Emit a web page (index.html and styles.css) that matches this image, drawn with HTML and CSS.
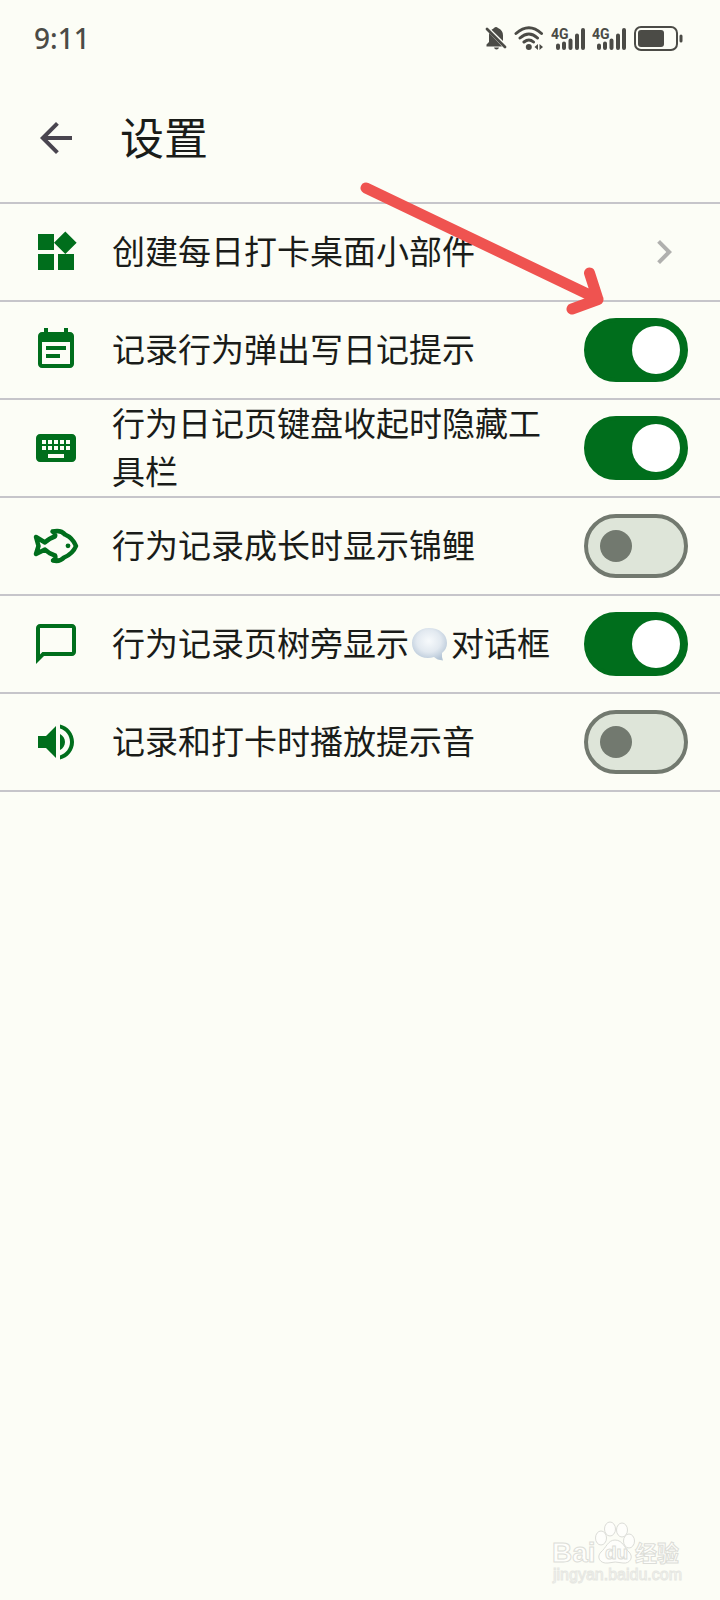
FILE: index.html
```html
<!DOCTYPE html>
<html lang="zh-CN">
<head>
    <meta charset="UTF-8">
    <meta name="viewport" content="width=device-width, initial-scale=1.0">
    <title>设置</title>
    <link rel="stylesheet" href="styles.css">
</head>
<body>
    <div class="status-bar">
        <span class="time">9:11</span>
        <div class="status-icons">
            <svg width="22" height="26" viewBox="0 0 22 26">
                <path d="M6.500 4.800Q8.600 3.500 9 3Q11 1 13 3Q18 5 18 10.500V16ZM4.200 8L17 21.500H1.500V19.500L4 17V11Q4 9 4.200 8ZM9 22.500H14Q13.500 24.500 11.500 24.500T9 22.500Z" fill="currentColor"/>
                <path d="M2 4L20 22" stroke="currentColor" stroke-width="2.800" stroke-linecap="round"/>
            </svg>
            <svg width="30" height="26" viewBox="0 0 30 26" fill="none" stroke="currentColor" stroke-width="3" stroke-linecap="round">
                <path d="M2 8.500Q15-3 27.500 8.500M6 13Q15 5 23.500 13M10 17Q15 13 19.500 17"/>
                <circle cx="14.800" cy="22" r="3" fill="currentColor" stroke="none"/>
                <path d="M24 19V25L20.500 22ZM25.500 19V25L29 22Z" fill="currentColor" stroke="none"/>
            </svg>
            <svg width="34" height="26" viewBox="0 0 34 26">
                <text class="network" x="0" y="14">4G</text>
                <path d="M7 20.500V23M13 18.500V23M19.500 15.500V23M26 10.500V23M32 5V23" stroke="currentColor" stroke-width="4" stroke-linecap="round"/>
            </svg>
            <svg width="34" height="26" viewBox="0 0 34 26">
                <text class="network" x="0" y="14">4G</text>
                <path d="M7 20.500V23M13 18.500V23M19.500 15.500V23M26 10.500V23M32 5V23" stroke="currentColor" stroke-width="4" stroke-linecap="round"/>
            </svg>
            <svg width="50" height="26" viewBox="0 0 50 26">
                <rect x="2" y="2" width="42" height="23" rx="6" fill="none" stroke="currentColor" stroke-width="2"/>
                <rect x="5" y="5" width="26" height="17" rx="3" fill="currentColor"/>
                <path d="M48 11V16" stroke="currentColor" stroke-width="3" stroke-linecap="round"/>
            </svg>
        </div>
    </div>

    <header class="app-bar">
        <button class="back" type="button" aria-label="返回">
            <svg class="icon" viewBox="0 0 24 24" fill="currentColor"><path d="M20 11H7.830l5.590-5.590L12 4l-8 8 8 8 1.410-1.410L7.830 13H20v-2z"/></svg>
        </button>
        <h1>设置</h1>
    </header>

    <main class="settings">
        <a class="row" href="#">
            <svg class="icon" viewBox="0 0 24 24" fill="currentColor"><path d="M13 13v8h8v-8h-8zM3 21h8v-8H3v8zM3 3v8h8V3H3zm13.660-1.310L11 7.340 16.660 13l5.660-5.660-5.660-5.650z"/></svg>
            <span class="text">创建每日打卡桌面小部件</span>
            <svg class="icon chevron" viewBox="0 0 24 24" fill="currentColor"><path d="M10 6L8.590 7.410 13.170 12l-4.580 4.590L10 18l6-6z"/></svg>
        </a>
        <label class="row">
            <svg class="icon" viewBox="0 0 24 24" fill="currentColor"><path d="M17 10H7v2h10v-2zm2-7h-1V1h-2v2H8V1H6v2H5c-1.110 0-1.990.900-1.990 2L3 19c0 1.100.890 2 2 2h14c1.100 0 2-.900 2-2V5c0-1.100-.900-2-2-2zm0 16H5V8h14v11zm-5-5H7v2h7v-2z"/></svg>
            <span class="text">记录行为弹出写日记提示</span>
            <input class="switch" type="checkbox" role="switch" checked>
        </label>
        <label class="row">
            <svg class="icon" viewBox="0 0 24 24" fill="currentColor"><path d="M20 5H4c-1.100 0-1.990.900-1.990 2L2 17c0 1.100.900 2 2 2h16c1.100 0 2-.900 2-2V7c0-1.100-.900-2-2-2zm-9 3h2v2h-2V8zm0 3h2v2h-2v-2zM8 8h2v2H8V8zm0 3h2v2H8v-2zm-1 2H5v-2h2v2zm0-3H5V8h2v2zm9 7H8v-2h8v2zm0-4h-2v-2h2v2zm0-3h-2V8h2v2zm3 3h-2v-2h2v2zm0-3h-2V8h2v2z"/></svg>
            <span class="text">行为日记页键盘收起时隐藏工具栏</span>
            <input class="switch" type="checkbox" role="switch" checked>
        </label>
        <label class="row">
            <svg class="icon" viewBox="0 0 48 48" fill="none" stroke="currentColor" stroke-width="4.500" stroke-linejoin="round">
                <path d="M4 15L13 20.500C16 17.500 19 15.500 23 14.500Q24 12 20.500 9.500Q29 7.500 33 12.500C39 15 42 19 44 24C42 29 38 33 32 35.500Q28 40 21 38.500Q24.500 36 23 33.500C19 32.500 16 30.500 13 27.500L4 32L6.500 24Z"/>
                <circle cx="36" cy="23.800" r="2.400" fill="currentColor" stroke="none"/>
            </svg>
            <span class="text">行为记录成长时显示锦鲤</span>
            <input class="switch" type="checkbox" role="switch">
        </label>
        <label class="row">
            <svg class="icon" viewBox="0 0 24 24" fill="currentColor"><path d="M20 2H4c-1.100 0-2 .900-2 2v18l4-4h14c1.100 0 2-.900 2-2V4c0-1.100-.900-2-2-2zm0 14H5.200L4 17.200V4h16v12z"/></svg>
            <span class="text">行为记录页树旁显示<svg class="bubble" viewBox="0 0 42 36" aria-hidden="true">
                <defs>
                    <radialGradient id="bubble-fill" cx="0.480" cy="0.400" r="0.620">
                        <stop offset="0" stop-color="#f7fafc"/>
                        <stop offset="0.550" stop-color="#e2e9f0"/>
                        <stop offset="1" stop-color="#b4c5d6"/>
                    </radialGradient>
                </defs>
                <path d="M20 2C30 2 38 8 38 17Q38 23 33 27Q32.500 31 34 34.500Q28 34 25 31Q22 32 19 32C9 32 3 25 3 17S10 2 20 2Z" fill="url(#bubble-fill)"/>
            </svg>对话框</span>
            <input class="switch" type="checkbox" role="switch" checked>
        </label>
        <label class="row">
            <svg class="icon" viewBox="0 0 24 24" fill="currentColor"><path d="M3 9v6h4l5 5V4L7 9H3zm13.500 3c0-1.770-1.020-3.290-2.500-4.030v8.050c1.480-.730 2.500-2.250 2.500-4.020zM14 3.230v2.060c2.890.860 5 3.540 5 6.710s-2.110 5.850-5 6.710v2.060c4.010-.910 7-4.490 7-8.770s-2.990-7.860-7-8.770z"/></svg>
            <span class="text">记录和打卡时播放提示音</span>
            <input class="switch" type="checkbox" role="switch">
        </label>
    </main>

    <svg class="pointer" width="250" height="140" viewBox="0 0 250 140" aria-hidden="true">
        <path d="M11 12L243 123M234.500 97L243 123.500L217 133" fill="none" stroke="#ef5350" stroke-width="11" stroke-linecap="round" stroke-linejoin="round"/>
    </svg>

    <svg class="watermark" width="136" height="68" viewBox="0 0 136 68">
        <g class="outline">
            <text class="latin" x="2" y="43">Bai</text>
            <ellipse cx="51" cy="19" rx="5.500" ry="7"/>
            <ellipse cx="60" cy="10" rx="5.500" ry="7"/>
            <ellipse cx="72" cy="11" rx="5.500" ry="7"/>
            <ellipse cx="79" cy="22" rx="5.500" ry="7"/>
            <path d="M65 21C73 21 75 30 79 33C84 38 80 45 73 44Q65 42 58 44C50 45 46 38 51 33C56 29 58 21 65 21Z"/>
            <text class="du" x="55" y="40">du</text>
            <text class="cjk" x="85" y="42">经验</text>
            <text class="site" x="3" y="61">jingyan.baidu.com</text>
        </g>
    </svg>
</body>
</html>
```
FILE: styles.css
```css
* {
    box-sizing: border-box;
    margin: 0;
    padding: 0;
}

body {
    position: relative;
    min-height: 100vh;
    background-color: #fcfdf6;
    color: #1a1c19;
    font-family: "Noto Sans", "Noto Sans CJK SC", sans-serif;
}

svg {
    display: block;
    flex-shrink: 0;
}

.status-bar {
    display: flex;
    align-items: center;
    justify-content: space-between;
    height: 74px;
    padding: 2px 37px 0 34px;
    color: #4b4b46;
}

.time {
    font-size: 28px;
    font-weight: 500;
    line-height: 32px;
}

.status-icons {
    display: flex;
    align-items: center;
    gap: 7px;
}

.network {
    font-family: "Roboto", sans-serif;
    font-size: 14px;
    font-weight: 700;
    fill: currentColor;
}

.app-bar {
    display: flex;
    align-items: center;
    gap: 40px;
    height: 128px;
    padding: 0 32px;
}

.back {
    border: none;
    background: none;
    color: #49454f;
    cursor: pointer;
}

h1 {
    font-size: 44px;
    font-weight: 400;
    line-height: 56px;
}

.icon {
    width: 48px;
    height: 48px;
}

.settings {
    border-top: 2px solid #c6c5ca;
}

.row {
    display: flex;
    align-items: center;
    min-height: 98px;
    padding: 0 32px;
    border-bottom: 2px solid #c6c5ca;
    color: #006e1c;
    text-decoration: none;
    cursor: pointer;
}

.text {
    flex: 1;
    margin: 0 24px 0 32px;
    color: #1a1c19;
    font-size: 33px;
    line-height: 48px;
}

.chevron {
    color: #b0b0ae;
}

.bubble {
    display: inline-block;
    width: 42px;
    height: 36px;
    vertical-align: -6px;
}

.switch {
    display: flex;
    flex-shrink: 0;
    align-items: center;
    width: 104px;
    height: 64px;
    padding: 0 12px;
    border: 4px solid #72796f;
    border-radius: 32px;
    background-color: #dee5d9;
    appearance: none;
    cursor: pointer;
}

.switch::before {
    content: "";
    width: 32px;
    height: 32px;
    border-radius: 50%;
    background-color: #72796f;
}

.switch:checked {
    justify-content: flex-end;
    padding: 0 4px;
    border-color: #006e1c;
    background-color: #006e1c;
}

.switch:checked::before {
    width: 48px;
    height: 48px;
    background-color: #ffffff;
}

/* arrow drawn over the list */
.pointer {
    position: absolute;
    top: 176px;
    right: 115px;
    pointer-events: none;
}

.watermark {
    position: absolute;
    right: 34px;
    bottom: 13px;
}

.outline {
    fill: #fefefb;
    stroke: #dcddd8;
    stroke-width: 1px;
}

.latin,
.du,
.site {
    font-family: "Liberation Sans", sans-serif;
}

.latin {
    font-size: 28px;
    font-weight: 700;
}

.du {
    font-size: 19px;
    font-weight: 700;
}

.cjk {
    font-family: "Noto Sans CJK SC", sans-serif;
    font-size: 22px;
    font-weight: 700;
}

.site {
    font-size: 16px;
    stroke: #e6e7e2;
}
```
